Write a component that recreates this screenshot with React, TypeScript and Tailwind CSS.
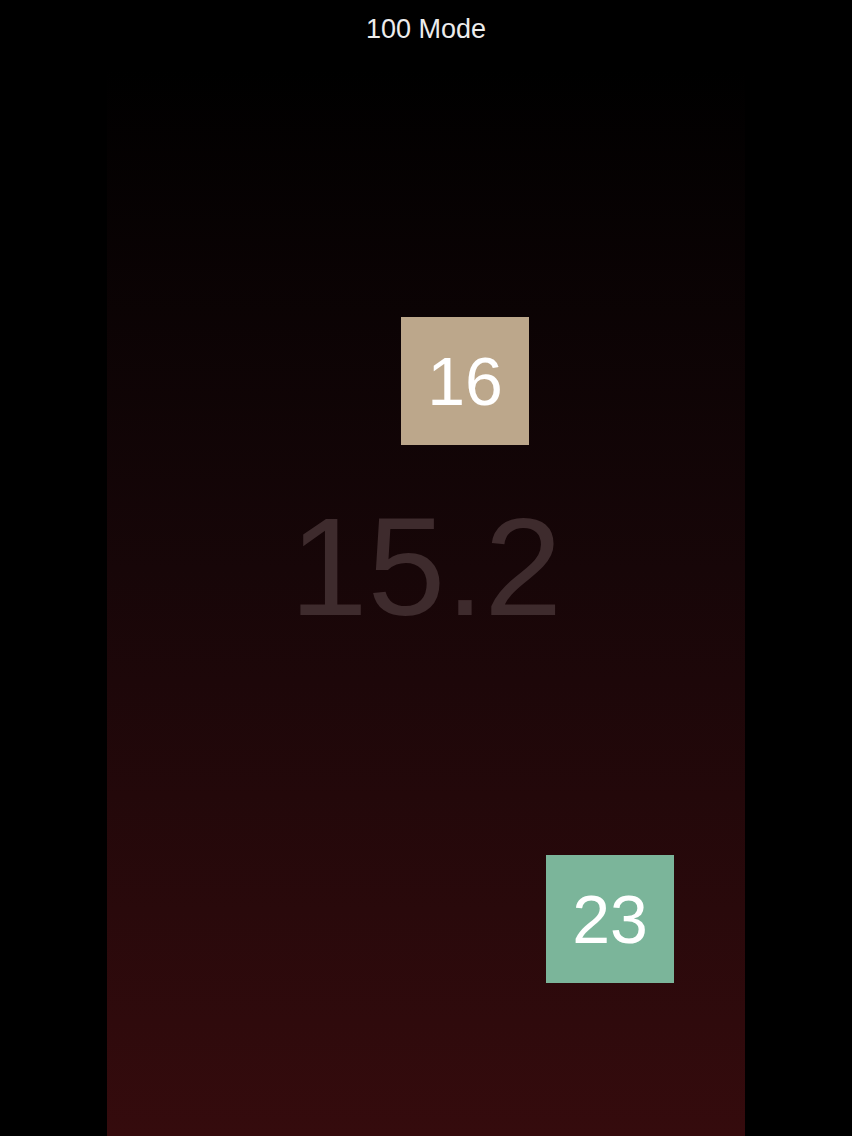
import React from 'react';

interface Tile {
  value: number;
  left: number;
  top: number;
  color: string;
}

const tiles: Tile[] = [
  { value: 16, left: 294, top: 317, color: 'bg-[#bca78b]' },
  { value: 23, left: 439, top: 855, color: 'bg-[#7bb59a]' },
];

const App: React.FC = () => {
  return (
    <div
      className="w-[852px] h-[1136px] bg-black overflow-hidden"
      style={{ fontFamily: '"Liberation Sans", Arial, sans-serif' }}
    >
      <div className="relative ml-[107px] w-[638px] h-[1136px] bg-[linear-gradient(to_bottom,#000_6%,#170608_50%,#350b0d_100%)]">
        <header className="pt-[16px] text-center text-[27px] leading-none text-[#ececec]">
          100 Mode
        </header>

        {/* current average */}
        <div className="absolute left-0 right-0 top-[497px] text-center text-[140px] leading-none text-[#3e2b2d]">
          15.2
        </div>

        {tiles.map((t) => (
          <div
            key={t.value}
            className={`absolute w-[128px] h-[128px] flex items-center justify-center text-white text-[68px] leading-none ${t.color}`}
            style={{ left: t.left, top: t.top }}
          >
            {t.value}
          </div>
        ))}
      </div>
    </div>
  );
};

export default App;
